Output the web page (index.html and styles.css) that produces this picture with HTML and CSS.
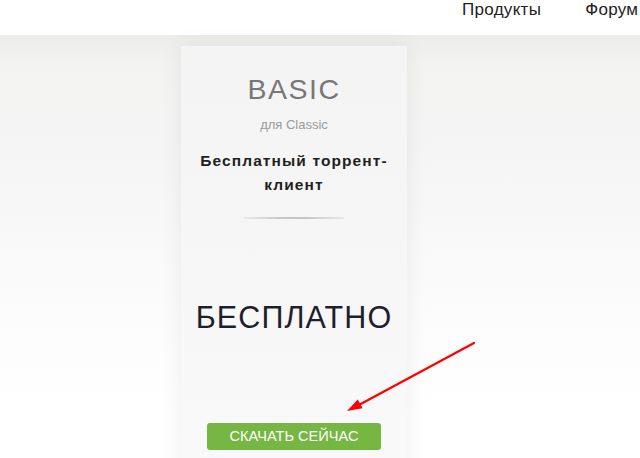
FILE: index.html
```html
<!DOCTYPE html>
<html lang="ru">
<head>
<meta charset="utf-8">
<title>BASIC</title>
<link rel="stylesheet" href="styles.css">
</head>
<body>
<header class="topbar">
  <nav class="nav">
    <a class="nav-link" href="#">Продукты</a>
    <a class="nav-link" href="#">Форум</a>
  </nav>
</header>
<main class="stage">
  <section class="card">
    <h2 class="plan">BASIC</h2>
    <p class="plan-sub">для Classic</p>
    <h3 class="plan-title">Бесплатный торрент-клиент</h3>
    <hr class="divider">
    <p class="price">БЕСПЛАТНО</p>
    <a class="btn" href="#">СКАЧАТЬ СЕЙЧАС</a>
  </section>
</main>
<svg class="annotation" width="640" height="458" viewBox="0 0 640 458" aria-hidden="true">
  <line x1="474" y1="343" x2="357" y2="406" stroke="#ff0000" stroke-width="2.2" stroke-linecap="round"/>
  <polygon points="347,411 362.6,408.3 357.8,399.5" fill="#ff0000"/>
</svg>
</body>
</html>
```
FILE: styles.css
```css
html, body {
  margin: 0;
  padding: 0;
}
body {
  width: 640px;
  height: 458px;
  overflow: hidden;
  position: relative;
  background: #ffffff;
  font-family: "Liberation Sans", Arial, sans-serif;
}
.topbar {
  height: 35px;
  background: #ffffff;
  overflow: hidden;
}
.nav {
  display: flex;
  gap: 44px;
  padding-left: 462px;
  white-space: nowrap;
}
.nav-link {
  font-size: 17px;
  line-height: 19px;
  letter-spacing: 0.3px;
  color: #222222;
  text-decoration: none;
}
.stage {
  height: 423px;
  padding-top: 11px;
  box-sizing: border-box;
  background: linear-gradient(to bottom, #ecede9 0px, #f3f3f2 30px, #f5f5f5 120px, #fbfbfb 260px, #ffffff 380px);
}
.card {
  margin-left: 181px;
  width: 226px;
  height: 480px;
  box-sizing: border-box;
  padding: 29px 10px 0;
  background: linear-gradient(to bottom, #f4f4f4 0px, #f6f6f6 200px, #f9f9f9 400px);
  box-shadow: 0 0 22px rgba(0, 0, 0, 0.07);
  display: flex;
  flex-direction: column;
  align-items: center;
  text-align: center;
}
.plan {
  margin: 0;
  font-size: 28.5px;
  line-height: 28px;
  font-weight: 400;
  letter-spacing: 1.5px;
  color: #777777;
}
.plan-sub {
  margin: 14px 0 0;
  font-size: 13px;
  line-height: 16px;
  color: #9a9a9a;
}
.plan-title {
  margin: 16px 0 0;
  font-size: 15.5px;
  line-height: 24px;
  font-weight: 700;
  letter-spacing: 1.1px;
  color: #1f1f1f;
}
.divider {
  margin: 20px 0 0;
  width: 100px;
  height: 2px;
  border: 0;
  background: radial-gradient(ellipse at center, rgba(0, 0, 0, 0.35) 0%, rgba(0, 0, 0, 0.12) 55%, rgba(0, 0, 0, 0) 100%);
}
.price {
  margin: 83px 0 0;
  font-size: 30.5px;
  line-height: 30px;
  letter-spacing: 1.1px;
  color: #1e1e2c;
}
.btn {
  margin-top: 91px;
  width: 174px;
  height: 27px;
  border-radius: 3px;
  background: #76b642;
  color: #ffffff;
  font-size: 14.6px;
  line-height: 27px;
  text-decoration: none;
  text-align: center;
}
.annotation {
  position: absolute;
  left: 0;
  top: 0;
  pointer-events: none;
}
```
